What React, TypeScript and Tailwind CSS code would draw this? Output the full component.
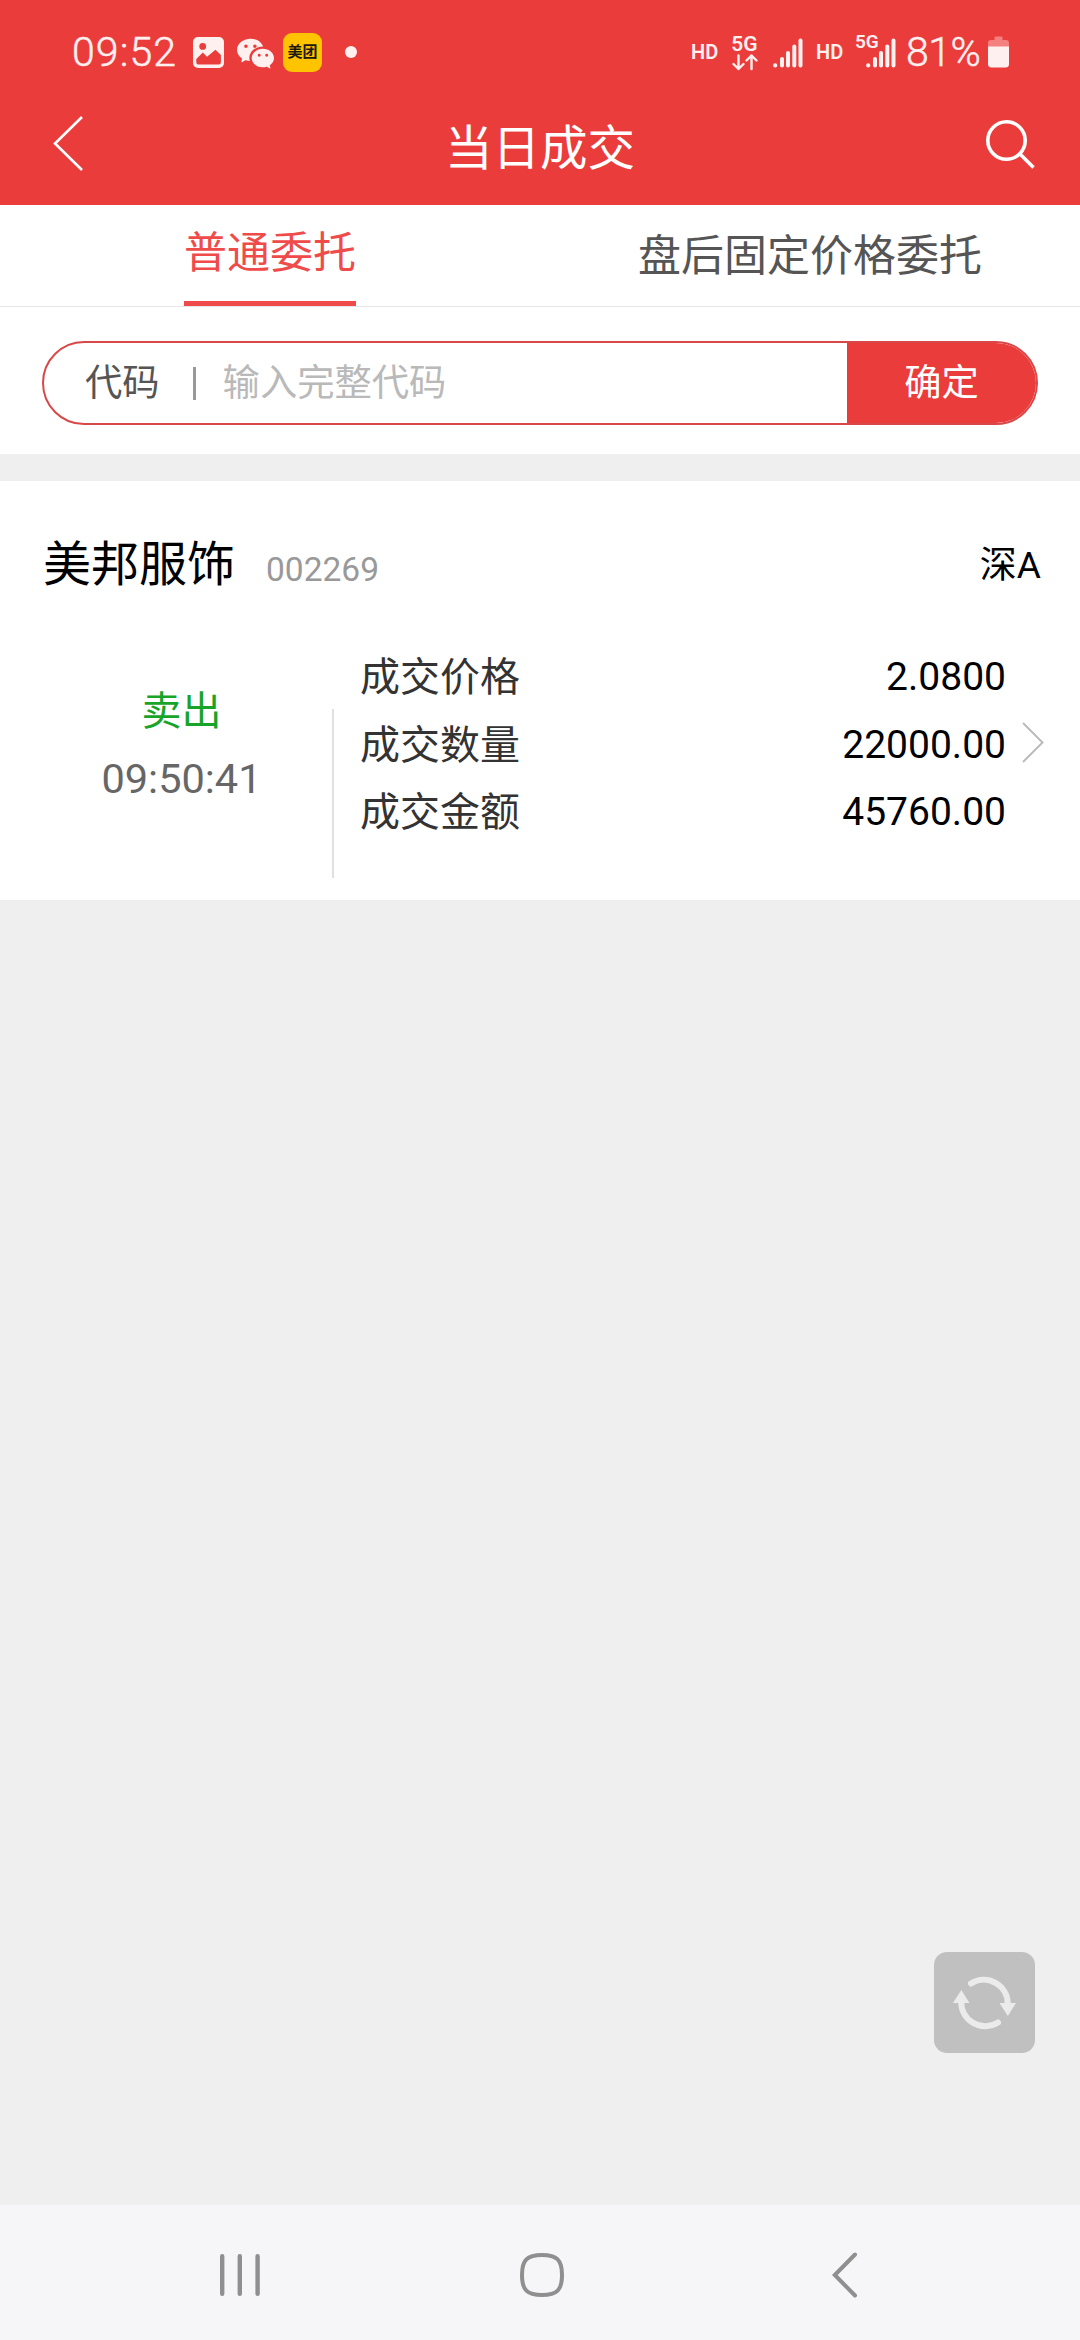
import { BsWechat } from 'react-icons/bs';

const details = [
  { label: '成交价格', value: '2.0800' },
  { label: '成交数量', value: '22000.00' },
  { label: '成交金额', value: '45760.00' },
];

function Signal() {
  return (
    <svg width="30" height="30" viewBox="0 0 30 30" fill="#fff0f0">
      <circle cx="2.2" cy="27.4" r="2.1" />
      <rect x="7" y="19" width="4" height="10.5" rx="2" />
      <rect x="13" y="13" width="4" height="16.5" rx="2" />
      <rect x="19.3" y="6.5" width="4" height="23" rx="2" />
      <rect x="25.5" y="0.5" width="4" height="29" rx="2" />
    </svg>
  );
}

function StatusBar() {
  return (
    <div className="flex h-[104px] items-center pl-[72px] pr-[71px] text-[#fff0f0]">
      <span className="w-[104px] whitespace-nowrap text-[41px] font-light leading-[41px] tracking-[1.1px] [-webkit-text-stroke:0.5px]">09:52</span>
      <svg className="ml-[17px] mt-px" width="31" height="31" viewBox="0 0 31 31">
        <rect width="31" height="31" rx="5" fill="#fff0f0" />
        <circle cx="9.7" cy="9.4" r="3.4" fill="#eb3c3c" />
        <path d="M3.3 22 L9.8 15.6 L14 19.7 L22.5 12.8 L27.9 18 V25 Q27.9 27.6 25 27.6 H6 Q3.3 27.6 3.3 25 Z" fill="#eb3c3c" />
      </svg>
      <BsWechat className="ml-[13px] size-[37px]" />
      <div className="ml-[9px] flex size-[39px] items-center justify-center rounded-[9px] bg-[#ffc300] text-[15px] font-bold leading-none text-[#1c1a10]">
        美团
      </div>
      <div className="ml-[23px] size-3 rounded-full bg-[#fff0f0]" />

      <div className="ml-auto flex items-center">
        <span className="w-[27px] text-[20px] font-semibold leading-5">HD</span>
        <div className="ml-[13px] flex w-[27px] flex-col items-center">
          <span className="text-[21px] font-semibold leading-[20px]">5G</span>
          <svg width="26" height="17" viewBox="0 0 26 17" fill="none" stroke="#fff0f0" strokeWidth="2.4" strokeLinecap="round" strokeLinejoin="round">
            <path d="M6.5 1.5 V15 M1.5 10 L6.5 15 L11.5 10" />
            <path d="M19.5 15 V1.5 M14.5 6.5 L19.5 1.5 L24.5 6.5" />
          </svg>
        </div>
        <div className="ml-[15px] mt-px">
          <Signal />
        </div>
        <span className="ml-[13px] w-[27px] text-[20px] font-semibold leading-5">HD</span>
        <span className="-mr-[14px] -mt-5 ml-[12px] w-[23px] text-[19px] font-semibold leading-5">5G</span>
        <div className="ml-0.5 mt-px">
          <Signal />
        </div>
        <span className="ml-[10px] w-[78px] whitespace-nowrap text-[41px] font-light leading-[41px] tracking-[-0.5px] [-webkit-text-stroke:0.5px]">81%</span>
        <svg className="ml-[4px]" width="21" height="32" viewBox="0 0 21 32">
          <path d="M6.5 1.5 Q6.5 0.5 8 0.5 H13 Q14.5 0.5 14.5 1.5 V4 H18 Q21 4 21 7 V11 H0 V7 Q0 4 3 4 H6.5 Z" fill="#f58080" />
          <path d="M0 10.5 H21 V28 Q21 31.5 17.5 31.5 H3.5 Q0 31.5 0 28 Z" fill="#fff0f0" />
        </svg>
      </div>
    </div>
  );
}

export default function App() {
  return (
    <main className="flex h-[2340px] w-[1080px] flex-col overflow-hidden bg-[#efefef] font-[Roboto,'Noto_Sans_CJK_SC',sans-serif]">
      {/* Header */}
      <header className="h-[205px] bg-[#eb3c3c]">
        <StatusBar />
        <div className="flex h-[80px] items-center justify-between pl-[53px] pr-[45px] text-white">
          <svg width="32" height="58" viewBox="0 0 32 58" fill="none" stroke="white" strokeWidth="2.6">
            <path d="M29 2 L2 28.5 L29 55" />
          </svg>
          <h1 className="ml-[10px] mt-[9px] text-[47.5px] leading-[60px]">当日成交</h1>
          <svg width="50" height="50" viewBox="0 0 50 50" fill="none" stroke="white" strokeWidth="3.6">
            <circle cx="21.5" cy="21.5" r="18.7" />
            <path d="M34.5 34.5 L48.5 48.5" />
          </svg>
        </div>
      </header>

      {/* Tabs */}
      <nav className="flex h-[102px] border-b border-[#e6e6e6] bg-white text-[43px]">
        <div className="flex flex-1 justify-center">
          <div className="h-[101px] border-b-[5px] border-[#f04b4b] leading-[96px] text-[#f04b4b]">普通委托</div>
        </div>
        <div className="flex-1 text-center leading-[102px] text-[#555]">盘后固定价格委托</div>
      </nav>

      {/* Search */}
      <section className="h-[147px] bg-white px-[42px] pt-[34px]">
        <div className="flex h-[84px] items-center overflow-hidden rounded-full border-2 border-[#d94848] text-[37.3px]">
          <span className="ml-[41px] pt-0.5 text-[#555]">代码</span>
          <div className="ml-[33px] h-[33px] w-[3px] bg-[#999]" />
          <span className="ml-[27px] flex-1 pt-0.5 text-[#b9b9b9]">输入完整代码</span>
          <button className="h-full w-[189px] bg-[#eb3c3c] pt-0.5 text-white">确定</button>
        </div>
      </section>

      {/* Trade record */}
      <section className="mt-[27px] h-[419px] bg-white">
        <div className="flex h-[117px] items-baseline pl-[43px] pr-[39px] pt-[49px] leading-[70px] text-black">
          <h2 className="text-[48px]">美邦服饰</h2>
          <span className="ml-[31px] text-[33.5px] text-[#999]">002269</span>
          <span className="relative -top-[3px] ml-auto text-[37px]">深A</span>
        </div>
        <div className="flex">
          <div className="flex w-[332px] flex-col items-center pl-[31px] pt-[81px]">
            <span className="text-[40px] leading-[66px] text-[#18a428]">卖出</span>
            <span className="text-[41.5px] leading-[68px] text-[#666]">09:50:41</span>
          </div>
          <div className="mt-[111px] h-[169px] w-[2px] bg-[#e0e0e0]" />
          <div className="flex flex-1 items-start pl-[26px] pr-[36px] pt-[46px]">
            <div className="flex-1">
              {details.map((row) => (
                <div key={row.label} className="flex justify-between text-[40px] leading-[67.5px]">
                  <span className="text-[#333]">{row.label}</span>
                  <span className="text-[39px] text-black">{row.value}</span>
                </div>
              ))}
            </div>
            <svg className="ml-[16px] mt-[78px]" width="22" height="41" viewBox="0 0 22 41" fill="none" stroke="#bbb" strokeWidth="2">
              <path d="M1 1 L20.5 20.5 L1 40" />
            </svg>
          </div>
        </div>
      </section>

      {/* Refresh button */}
      <div className="mt-auto flex justify-end pb-[152px] pr-[45px]">
        <button className="size-[101px] rounded-[13px] bg-[#c0c0c0]">
          <svg width="101" height="101" viewBox="0 0 101 101" fill="none" stroke="#ebebeb" strokeWidth="6" strokeLinecap="round">
            <path d="M37 31.5 A24 24 0 0 1 73.8 52" />
            <path d="M64 70.5 A24 24 0 0 1 27.2 49" />
            <path d="M65.5 51 H82 L73.8 64 Z" fill="#ebebeb" stroke="none" />
            <path d="M19 51 H35.5 L27.3 38 Z" fill="#ebebeb" stroke="none" />
          </svg>
        </button>
      </div>

      {/* System navigation */}
      <footer className="flex h-[135px] items-center justify-between bg-[#f6f6f8] pb-px pl-[219px] pr-[221px] pt-[5px]">
        <svg width="42" height="46" viewBox="0 0 42 46" stroke="#8f8f8f" strokeWidth="4.4" strokeLinecap="round">
          <path d="M3.2 4.3 V41.7 M20.8 4.3 V41.7 M38.6 4.3 V41.7" />
        </svg>
        <svg className="mr-[8px]" width="46" height="46" viewBox="0 0 46 46" fill="none" stroke="#8f8f8f" strokeWidth="4">
          <path d="M23 3 C38 3 43 8 43 23 C43 38 38 43 23 43 C8 43 3 38 3 23 C3 8 8 3 23 3 Z" />
        </svg>
        <svg width="28" height="46" viewBox="0 0 28 46" fill="none" stroke="#8f8f8f" strokeWidth="4" strokeLinecap="round">
          <path d="M24 2.5 L3.8 23 L24 43.5" />
        </svg>
      </footer>
    </main>
  );
}
